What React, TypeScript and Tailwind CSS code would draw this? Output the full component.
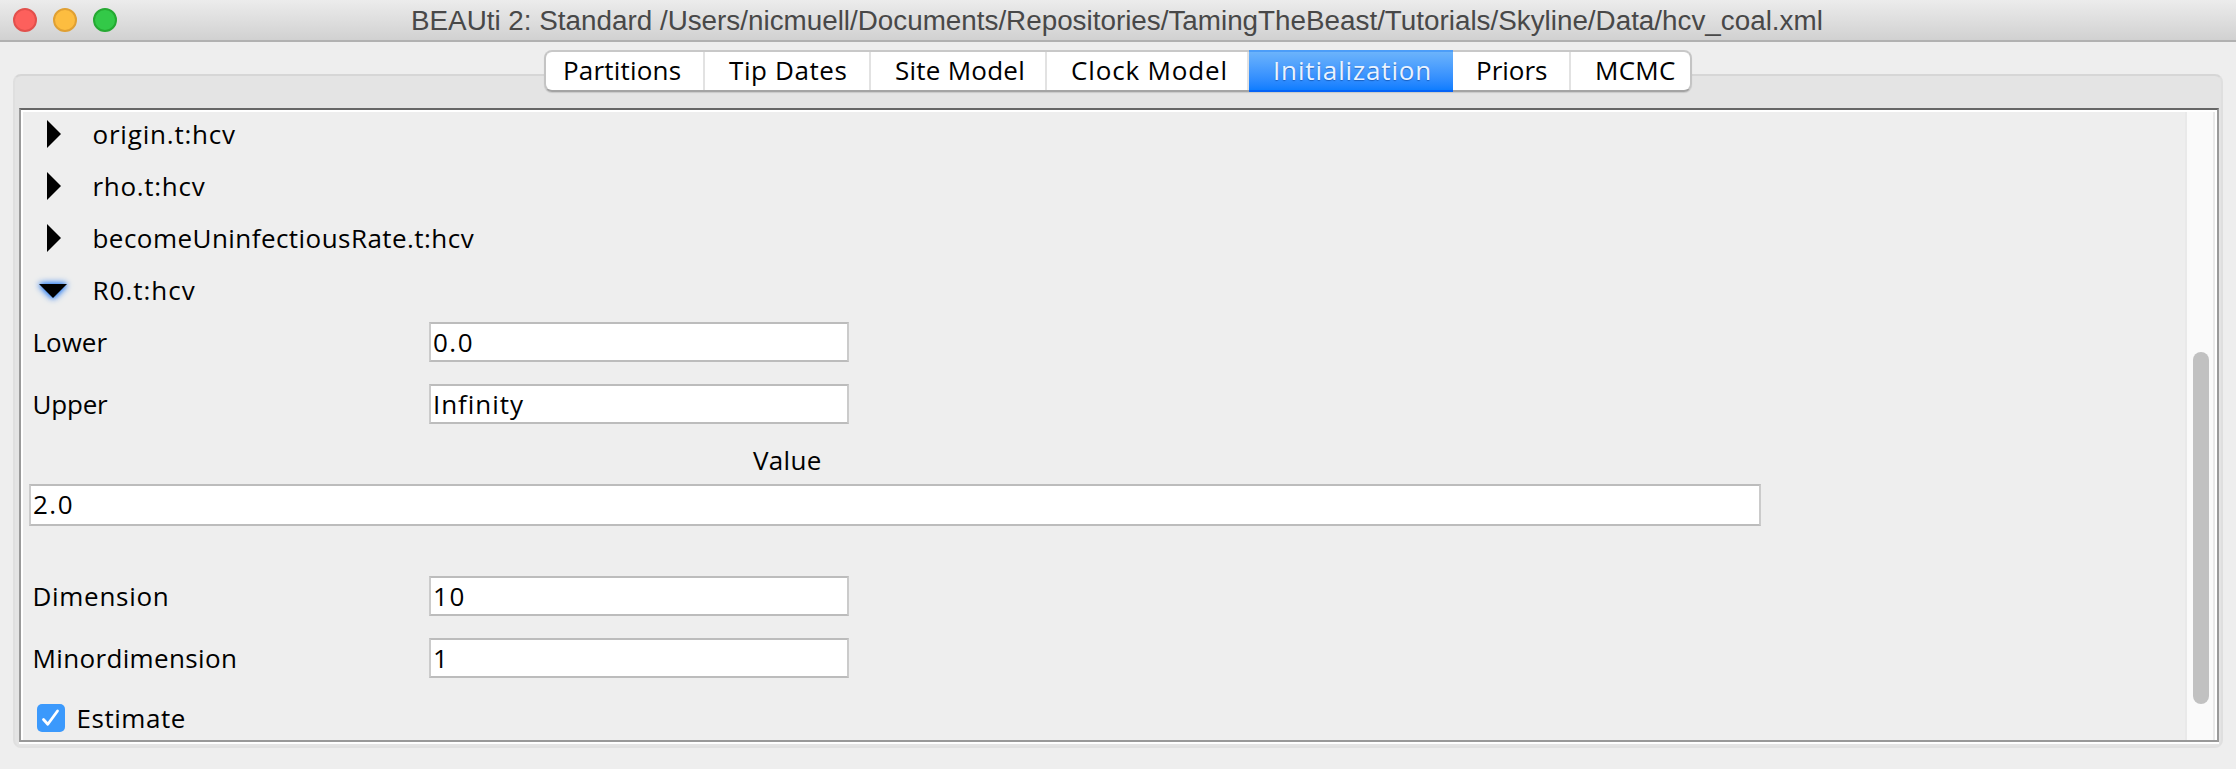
import clsx from "clsx";

const tabs = [
  { label: "Partitions", cell: "w-[161px] pl-[17px] rounded-l-[8px] border-l-2 border-l-[#c4c4c4] tracking-[0.2px]", divider: true },
  { label: "Tip Dates", cell: "w-[166px] pl-6 tracking-[0.6px]", divider: true },
  { label: "Site Model", cell: "w-[176px] pl-6 tracking-[0.25px]", divider: true },
  { label: "Clock Model", cell: "w-[202px] pl-6 tracking-[0.85px]", divider: true },
  { label: "Initialization", cell: "w-[204px] pl-6 tracking-[0.85px]", selected: true },
  { label: "Priors", cell: "w-[118px] pl-[23px]", divider: true },
  { label: "MCMC", cell: "w-[121px] pl-6 rounded-r-[8px] border-r-2 border-r-[#c4c4c4] tracking-[0.25px]" },
];

const nodes = [
  { label: "origin.t:hcv", tracking: "tracking-[0.8px]" },
  { label: "rho.t:hcv", tracking: "tracking-[0.7px]" },
  { label: "becomeUninfectiousRate.t:hcv", tracking: "tracking-[0.45px]" },
  { label: "R0.t:hcv", tracking: "tracking-[1px]", open: true },
];

function TitleBar() {
  return (
    <header className="flex h-[42px] shrink-0 items-center border-b-2 border-[#b1b1b1] bg-linear-to-b from-[#ececec] to-[#d1d1d1]">
      <div className="flex w-[411px] shrink-0 gap-4 pl-[13px]">
        <span className="size-6 rounded-full border-2 border-[#e2504c] bg-[#fd605c]" />
        <span className="size-6 rounded-full border-2 border-[#e0a033] bg-[#fdbd40]" />
        <span className="size-6 rounded-full border-2 border-[#25a932] bg-[#33c948]" />
      </div>
      <h1 className="pt-0.5 font-['Liberation_Sans',sans-serif] text-[27.82px] leading-8 whitespace-nowrap text-[#484848]">
        BEAUti 2: Standard /Users/nicmuell/Documents/Repositories/TamingTheBeast/Tutorials/Skyline/Data/hcv_coal.xml
      </h1>
    </header>
  );
}

function TabStrip() {
  return (
    <nav className="-mt-[26px] flex justify-center pr-[2px]">
      <div className="flex rounded-[8px] shadow-[0_1px_1px_rgba(0,0,0,0.12)]">
        {tabs.map((t) => (
          <button
            key={t.label}
            className={clsx(
              "h-[42px] border-y-2 pb-[2px] text-left leading-9 whitespace-nowrap",
              t.cell,
              t.selected
                ? "border-t-[#4c9df8] border-b-[#0663f6] bg-linear-to-b from-[#6bb3fb] to-[#0d7dff] text-[#e9f3ff] [text-shadow:0_1px_1px_rgba(0,50,130,0.5)]"
                : "border-t-[#c8c8c8] border-b-[#a4a4a4] bg-white",
              t.divider && "bg-linear-to-l from-[#e2e2e2] from-[2px] to-white to-[2px]",
            )}
          >
            {t.label}
          </button>
        ))}
      </div>
    </nav>
  );
}

function Disclosure({ open }: { open?: boolean }) {
  if (open) {
    return (
      <svg
        viewBox="0 0 28 14"
        className="ml-4 h-3.5 w-7 overflow-visible drop-shadow-[0_0_2px_#3f86ea]"
      >
        <path d="M0 0H28L14 14Z" className="fill-black drop-shadow-[0_0_3px_#3f8bf5]" />
      </svg>
    );
  }
  return (
    <svg viewBox="0 0 14 28" className="ml-6 h-7 w-3.5">
      <path d="M0 0L14 14L0 28Z" />
    </svg>
  );
}

function Field({ value, className }: { value: string; className: string }) {
  return (
    <input
      readOnly
      value={value}
      className={clsx(
        "block border-2 border-x-[#cbcbcb] border-y-[#bcbcbc] bg-white p-0 pl-[2px] outline-none",
        className,
      )}
    />
  );
}

function FieldRow({ label, labelClass, value, fieldClass }: { label: string; labelClass: string; value: string; fieldClass: string }) {
  return (
    <div className="flex h-10 items-center pl-[9.5px]">
      <label className={clsx("w-[396.5px] shrink-0", labelClass)}>{label}</label>
      <Field value={value} className={clsx("h-10 w-[420px]", fieldClass)} />
    </div>
  );
}

export default function App() {
  return (
    <div className="flex h-[769px] w-[2236px] flex-col overflow-hidden bg-[#eeeeee] font-['Open_Sans','Noto_Sans',sans-serif] text-[26px] leading-9 text-black">
      <TitleBar />
      <section className="mt-8 mr-[13px] ml-[13px] flex h-[674px] flex-col rounded-[8px] border-2 border-x-[#dfdfdf] border-t-[#d6d6d6] border-b-[#e1e1e1] bg-[#e4e4e4] pr-[2px] pb-[2px] pl-1">
        <TabStrip />
        <div className="mt-4 flex h-[636px] flex-col bg-white pb-[2px]">
          <div className="flex h-[634px] border-2 border-x-[#999999] border-t-[#666666] border-b-[#999999] bg-white px-[2px] pt-[2px]">
            <main className="flex-1 overflow-hidden bg-[#eeeeee]">
              <ul className="flex flex-col gap-2">
                {nodes.map((n) => (
                  <li key={n.label} className="flex h-11 items-center">
                    <div className={clsx("w-[69.5px] shrink-0", n.open && "pt-0.5")}>
                      <Disclosure open={n.open} />
                    </div>
                    <span className={n.tracking}>{n.label}</span>
                  </li>
                ))}
              </ul>
              <div className="mt-2.5 flex flex-col gap-[22px]">
                <FieldRow label="Lower" labelClass="tracking-[0px]" value="0.0" fieldClass="tracking-[1.5px]" />
                <FieldRow label="Upper" labelClass="tracking-[-0.2px]" value="Infinity" fieldClass="tracking-[0.95px]" />
              </div>
              <div className="flex h-[60px] items-center pt-3 pl-[730px]">
                <span className="tracking-[0.3px]">Value</span>
              </div>
              <Field value="2.0" className="ml-1.5 h-[42px] w-[1732px] pb-0.5 tracking-[1.5px]" />
              <div className="mt-[50px] flex flex-col gap-[22px]">
                <FieldRow label="Dimension" labelClass="tracking-[0.7px]" value="10" fieldClass="tracking-[1.6px]" />
                <FieldRow label="Minordimension" labelClass="tracking-[0.35px]" value="1" fieldClass="tracking-[1.6px]" />
              </div>
              <div className="mt-[22px] flex h-9 items-center pl-3.5">
                <span className="flex size-7 items-center justify-center rounded-[5px] bg-[#3b99fc]">
                  <svg viewBox="0 0 28 28" className="size-7 fill-none stroke-white stroke-[2.8]">
                    <path d="M6.5 15.5L10.8 20.3L20.5 7" strokeLinecap="round" strokeLinejoin="round" />
                  </svg>
                </span>
                <span className="pl-[11.5px] tracking-[0.55px]">Estimate</span>
              </div>
            </main>
            <aside className="flex w-[30px] shrink-0 flex-col border-x-2 border-x-[#e9e9e9] bg-[#fafafa] pt-[240px] pl-1.5">
              <div className="h-[352px] w-4 rounded-full bg-[#c1c1c1]" />
            </aside>
          </div>
        </div>
      </section>
    </div>
  );
}
